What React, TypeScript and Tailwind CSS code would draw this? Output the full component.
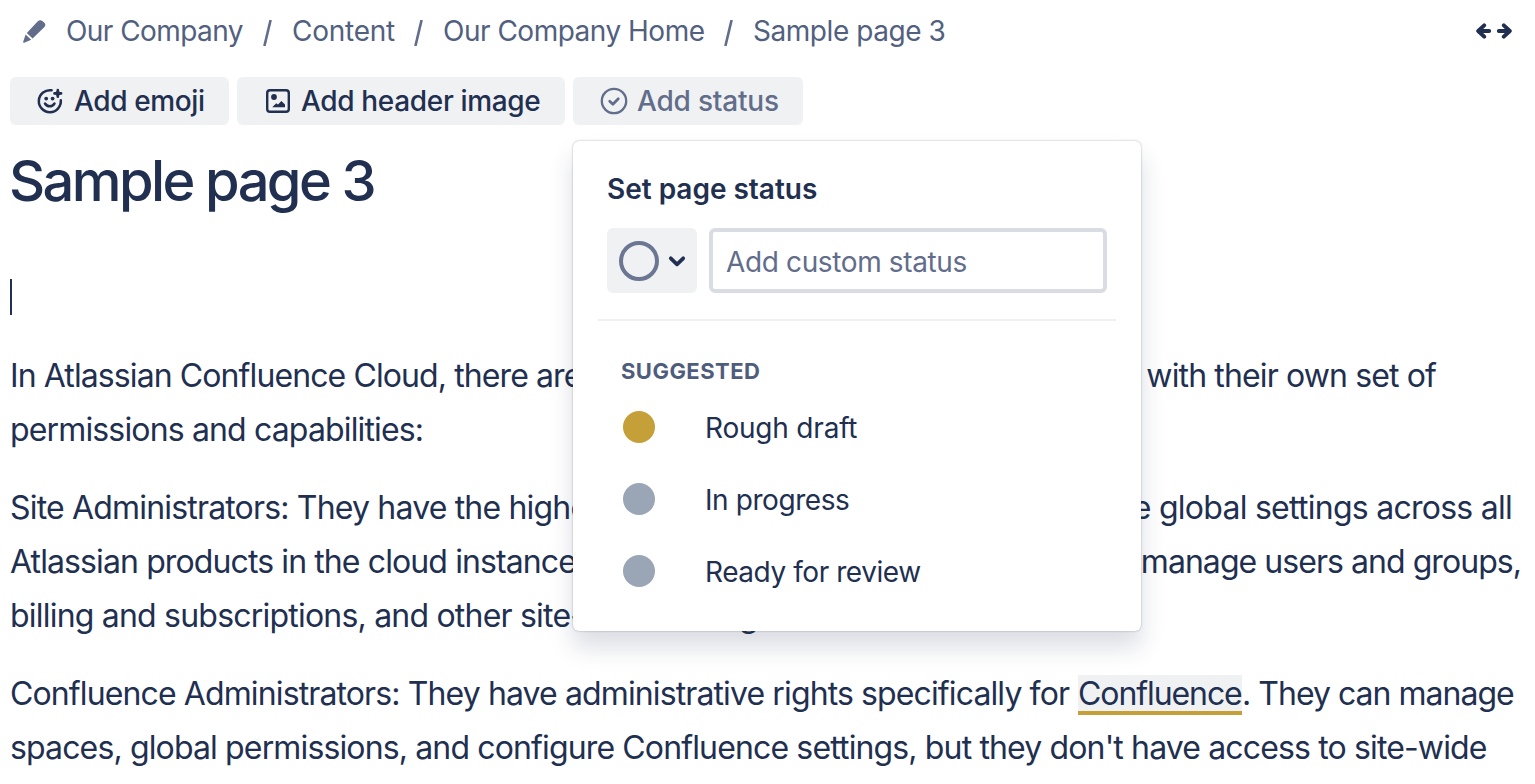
import React from "react";

function PencilIcon() {
  return (
    <svg width="24" height="25" viewBox="0 0 24 25" fill="#616d8a" aria-hidden="true">
      <path d="M4.800 14 15.600 2.600c1.500-1.600 3.200-1.900 4.700-.7l1.900 1.600c1.600 1.400 1.500 3.300 0 4.800L10.600 19.600Z" />
      <path d="M3.600 15.400 9.200 20.800 2.200 23.700C1.400 24 1 23.600 1.200 22.800Z" />
    </svg>
  );
}

function ExpandIcon() {
  return (
    <svg width="36" height="16" viewBox="0 0 36 16" fill="none" stroke="#212f50" strokeWidth="3.9" strokeLinecap="round" strokeLinejoin="round" aria-hidden="true">
      <path d="M8.200 2.300 2.200 8l6 5.700M2.500 8H13.200M27.800 2.300 33.800 8l-6 5.700M33.500 8H22.800" />
    </svg>
  );
}

function EmojiAddIcon() {
  return (
    <svg width="26" height="26" viewBox="0 0 26 26" fill="none" aria-hidden="true">
      <path d="M14.600 2.300A11 11 0 1 0 23.800 12.200" stroke="#212f50" strokeWidth="2.500" strokeLinecap="round" />
      <circle cx="9.200" cy="10.600" r="1.900" fill="#212f50" />
      <circle cx="15.600" cy="10.600" r="1.900" fill="#212f50" />
      <path d="M8 15.500c2.200 3.700 7.200 3.700 9.500 0" stroke="#212f50" strokeWidth="2.500" strokeLinecap="round" />
      <path d="M20.800 2.100V8.700M17.500 5.400H24.100" stroke="#212f50" strokeWidth="2.600" strokeLinecap="round" />
      <path d="M20.800 2 24.200 5.400 20.800 8.800 17.400 5.400Z" fill="#212f50" />
    </svg>
  );
}

function ImageIcon() {
  return (
    <svg width="24" height="24" viewBox="0 0 24 24" fill="none" aria-hidden="true">
      <rect x="1.200" y="1.200" width="21.600" height="21.600" rx="2.800" stroke="#212f50" strokeWidth="2.400" />
      <circle cx="8" cy="8" r="2.900" fill="#212f50" />
      <path d="M6.200 18.200 10.200 14.200 12 15.600 15.400 12 19 15.400V18.200Z" fill="#212f50" />
    </svg>
  );
}

function StatusIcon() {
  return (
    <svg width="28" height="28" viewBox="0 0 28 28" fill="none" stroke="#616d8a" aria-hidden="true">
      <circle cx="14" cy="14" r="12.200" strokeWidth="2.300" />
      <path d="m9.700 14.200 3.200 3.100 5.400-5.600" strokeWidth="2.700" strokeLinecap="round" strokeLinejoin="round" />
    </svg>
  );
}

function ChevronIcon() {
  return (
    <svg width="18" height="12" viewBox="0 0 18 12" fill="none" stroke="#212f50" strokeWidth="3.700" strokeLinecap="round" strokeLinejoin="round" aria-hidden="true">
      <path d="m2.800 3.300 6.200 6 6.200-6" />
    </svg>
  );
}

const crumbs = [
  { label: "Our Company", box: "w-[226px]", text: "tracking-[-0.56px]" },
  { label: "Content", box: "w-[151px]", text: "tracking-[-0.25px]" },
  { label: "Our Company Home", box: "w-[310px]", text: "tracking-[-0.5px]" },
  { label: "Sample page 3", box: "", text: "tracking-[-0.45px]" },
];

const slashes = ["left-[197px]", "left-[122px]", "left-[281px]"];

const suggestions = [
  { label: "Rough draft", dot: "bg-[#c5a038]", text: "tracking-[-0.2px]" },
  { label: "In progress", dot: "bg-[#9aa6b6]", text: "tracking-[-0.42px]" },
  { label: "Ready for review", dot: "bg-[#9aa6b6]", text: "tracking-[-0.44px]" },
];

function StatusPopup() {
  return (
    <div className="absolute left-0 top-16 z-10 h-[490px] w-[568px] rounded-[6px] bg-white px-[25px] pt-6 text-[#212f50] shadow-[0_0_2px_rgba(30,45,80,0.4),0_16px_24px_rgba(30,45,80,0.16)]">
      <h2 className="pl-[9px] text-[28px] font-semibold leading-[48px] tracking-[-0.02px]">Set page status</h2>
      <div className="mt-[15px] flex gap-3 px-[9px]">
        <button className="flex h-[65px] w-[90px] items-center gap-[9px] rounded-[6px] bg-[#f0f1f3] pl-3">
          <span className="size-10 rounded-full border-4 border-[#6a7692]" />
          <ChevronIcon />
        </button>
        <div className="flex h-[65px] flex-1 items-center rounded-[6px] border-4 border-[#d9dde3] pb-px pl-[13px] pt-1 text-[28px] leading-[48px] tracking-[-0.37px] text-[#616d8a]">
          Add custom status
        </div>
      </div>
      <hr className="mt-[26px] border-0 border-t-2 border-[#eff0f2]" />
      <div className="mt-[38px] pl-[23px] text-[22px] font-bold leading-6 tracking-[0.46px] text-[#4f5d7d]">SUGGESTED</div>
      <ul className="mt-[9px]">
        {suggestions.map((s) => (
          <li key={s.label} className="flex h-[72px] items-center gap-[50px] pl-[25px]">
            <span className={`-mt-0.5 size-8 rounded-full ${s.dot}`} />
            <span className={`text-[28px] leading-[48px] ${s.text}`}>{s.label}</span>
          </li>
        ))}
      </ul>
    </div>
  );
}

function SplitLine({ start, end, startClass, endClass }: { start: string; end: string; startClass: string; endClass: string }) {
  return (
    <span className="flex justify-between whitespace-nowrap">
      <span className={startClass}>{start}</span>
      <span className={endClass}>{end}</span>
    </span>
  );
}

const buttonClass = "flex h-12 items-center rounded-[6px] bg-[#f0f1f3] text-[28px] font-medium leading-[48px] whitespace-nowrap";

export default function App() {
  return (
    <div className="h-[784px] w-[1535px] overflow-hidden bg-white pt-[7px] font-['Inter',sans-serif] text-[#212f50]">
      <header className="flex h-12 items-center justify-between pl-[22px] pr-[23px]">
        <nav className="flex items-center text-[28px] leading-[48px] text-[#52607f]">
          <span className="mr-5">
            <PencilIcon />
          </span>
          {crumbs.map((c, i) => (
            <span key={c.label} className={`relative whitespace-nowrap ${c.box}`}>
              <span className={c.text}>{c.label}</span>
              {i < slashes.length && (
                <svg className={`absolute top-[13px] ${slashes[i]}`} width="9" height="26" viewBox="0 0 9 26" stroke="#616d8a" strokeWidth="2.600" aria-hidden="true">
                  <path d="M7.600 0 1.400 26" />
                </svg>
              )}
            </span>
          ))}
        </nav>
        <ExpandIcon />
      </header>

      <div className="mt-[22px] flex gap-2 pl-2.5">
        <button className={`${buttonClass} w-[219px] gap-[11px] pl-[27px] tracking-[-0.37px]`}>
          <EmojiAddIcon />
          Add emoji
        </button>
        <button className={`${buttonClass} w-[328px] gap-[11px] pl-[29px] tracking-[-0.34px]`}>
          <ImageIcon />
          Add header image
        </button>
        <div className="relative">
          <button className={`${buttonClass} w-[230px] gap-[9px] pl-[27px] tracking-[-0.19px] text-[#616d8a]`}>
            <StatusIcon />
            Add status
          </button>
          <StatusPopup />
        </div>
      </div>

      <h1 className="mt-6 pl-[9px] text-[56px] font-medium leading-[64px] tracking-[-2.6px]">Sample page 3</h1>
      <div className="ml-2.5 mt-[66px] h-9 w-0.5 bg-[#212f50]" />

      <article className="mt-[34px] space-y-6 pl-2.5 text-[32px] leading-[54px]">
        <p className="whitespace-nowrap">
          <span className="block pr-[99px]">
            <SplitLine start="In Atlassian Confluence Cloud, there are" end="each with their own set of" startClass="tracking-[-0.9px]" endClass="tracking-[-0.87px]" />
          </span>
          <span className="block tracking-[-0.85px]">permissions and capabilities:</span>
        </p>
        <p className="whitespace-nowrap">
          <span className="block pr-[23px]">
            <SplitLine start="Site Administrators: They have the highest" end="manage global settings across all" startClass="tracking-[-0.82px]" endClass="tracking-[-0.74px]" />
          </span>
          <span className="block pr-3.5">
            <SplitLine start="Atlassian products in the cloud instance." end="and manage users and groups," startClass="tracking-[-0.89px]" endClass="tracking-[-0.95px]" />
          </span>
          <span className="block tracking-[-0.79px]">billing and subscriptions, and other site-wide settings.</span>
        </p>
        <p className="whitespace-nowrap">
          <span className="flex items-baseline">
            <span className="w-[1068px] tracking-[-0.88px]">Confluence Administrators: They have administrative rights specifically for</span>
            <span className="w-[164px] border-b-4 border-[#c5a038] bg-[#f0f1f3] pt-px leading-[35px] tracking-[-1.08px]">Confluence</span>
            <span className="tracking-[-0.98px]">. They can manage</span>
          </span>
          <span className="block tracking-[-0.86px]">
            spaces, global permissions, and configure Confluence settings, but they don't have access to site-wide
          </span>
        </p>
      </article>
    </div>
  );
}
